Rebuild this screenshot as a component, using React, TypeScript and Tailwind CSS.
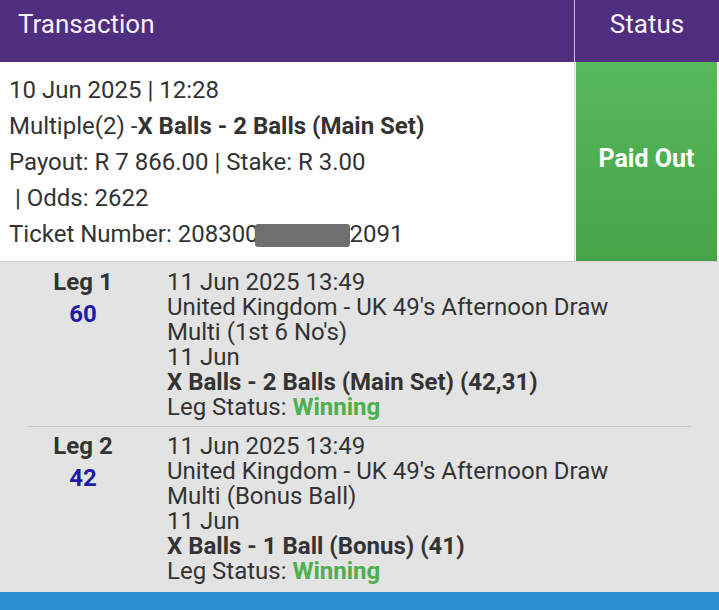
export default function App() {
  const legs = [
    {
      n: 1,
      odds: "60",
      market: "Multi (1st 6 No's)",
      pick: "X Balls - 2 Balls (Main Set) (42,31)",
    },
    {
      n: 2,
      odds: "42",
      market: "Multi (Bonus Ball)",
      pick: "X Balls - 1 Ball (Bonus) (41)",
    },
  ];

  return (
    <div className="w-[719px] h-[610px] overflow-hidden bg-[#e3e3e3] text-[#333333] font-['Roboto',sans-serif]">
      {/* Header */}
      <div className="flex h-[62px] bg-[#4f2d7f] text-[#f7f0fb] text-[26px]">
        <div className="flex-1 flex items-center pl-[18px] pb-[13px]">Transaction</div>
        <div className="w-[145px] flex items-center justify-center border-l border-[#c9c0d8] pb-[13px]">Status</div>
      </div>

      {/* Transaction row */}
      <div className="flex h-[200px] border-b border-[#d2d2d2]">
        <div className="flex-1 bg-white pl-[9px] pt-[10px] text-[24px] leading-[36px]">
          <div>10 Jun 2025 | 12:28</div>
          <div>
            Multiple(2) -<span className="font-bold">X Balls - 2 Balls (Main Set)</span>
          </div>
          <div>Payout: R 7 866.00 | Stake: R 3.00</div>
          <div>&nbsp;| Odds: 2622</div>
          <div className="flex items-center">
            <span>Ticket Number: 208300</span>
            <span className="inline-block w-[95px] h-[23px] rounded-[3px] bg-[#6f6f6f] mt-[2px] -ml-[4px]" />
            <span>2091</span>
          </div>
        </div>
        <div className="w-[145px] border-l border-[#d8d8d8] bg-[#f1f1f1] pl-[1px] pr-[2px]">
          <div className="h-full flex items-center justify-center bg-gradient-to-b from-[#56b95b] to-[#46a447] text-white font-bold text-[25px] pb-[6px]">
            Paid Out
          </div>
        </div>
      </div>

      {/* Legs */}
      <div className="mx-[28px]">
        {legs.map((leg, i) => (
          <div
            key={leg.n}
            className={
              "flex text-[24px] leading-[25px] " +
              (i === 0 ? "pt-[8px] pb-[6px] border-b border-[#c8c8c8]" : "pt-[7px] pb-[8px]")
            }
          >
            <div className="w-[110px] text-center font-bold">
              <div>Leg {leg.n}</div>
              <div className="text-[#1c1ca8] mt-[7px]">{leg.odds}</div>
            </div>
            <div className="pl-[29px]">
              <div>11 Jun 2025 13:49</div>
              <div>United Kingdom - UK 49's Afternoon Draw</div>
              <div>{leg.market}</div>
              <div>11 Jun</div>
              <div className="font-bold">{leg.pick}</div>
              <div>
                Leg Status: <span className="font-bold text-[#4caf50]">Winning</span>
              </div>
            </div>
          </div>
        ))}
      </div>

      {/* Bottom bar */}
      <div className="h-[20px] bg-[#2b8fd3]" />
    </div>
  );
}
